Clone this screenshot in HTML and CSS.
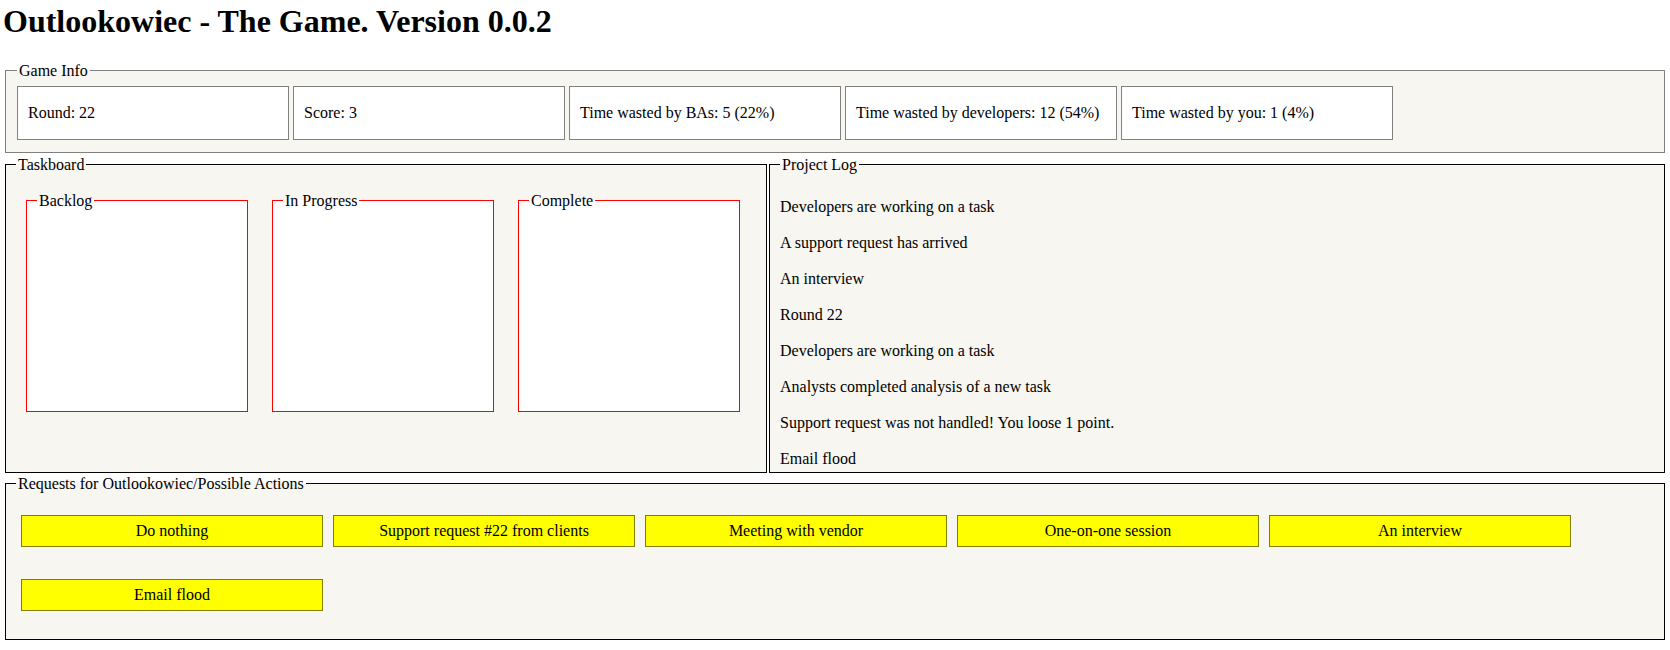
FILE: index.html
```html
<!DOCTYPE html>
<html>
<head>
<meta charset="utf-8">
<title>Outlookowiec - The Game</title>
<link rel="stylesheet" href="styles.css">
</head>
<body>
<h1 class="title">Outlookowiec - The Game. Version 0.0.2</h1>

<fieldset class="panel panel-info">
  <legend>Game Info</legend>
  <div class="info-row">
    <div class="info-box">Round: 22</div>
    <div class="info-box">Score: 3</div>
    <div class="info-box">Time wasted by BAs: 5 (22%)</div>
    <div class="info-box">Time wasted by developers: 12 (54%)</div>
    <div class="info-box">Time wasted by you: 1 (4%)</div>
  </div>
</fieldset>

<div class="middle">
  <fieldset class="panel panel-board">
    <legend>Taskboard</legend>
    <div class="board-body">
      <fieldset class="column"><legend>Backlog</legend><div class="column-body"></div></fieldset>
      <fieldset class="column"><legend>In Progress</legend><div class="column-body"></div></fieldset>
      <fieldset class="column"><legend>Complete</legend><div class="column-body"></div></fieldset>
    </div>
  </fieldset>
  <fieldset class="panel panel-log">
    <legend>Project Log</legend>
    <div class="log-body">
      <p>Developers are working on a task</p>
      <p>A support request has arrived</p>
      <p>An interview</p>
      <p>Round 22</p>
      <p>Developers are working on a task</p>
      <p>Analysts completed analysis of a new task</p>
      <p>Support request was not handled! You loose 1 point.</p>
      <p>Email flood</p>
    </div>
  </fieldset>
</div>

<fieldset class="panel panel-actions">
  <legend>Requests for Outlookowiec/Possible Actions</legend>
  <div class="actions">
    <button class="action">Do nothing</button>
    <button class="action">Support request #22 from clients</button>
    <button class="action">Meeting with vendor</button>
    <button class="action">One-on-one session</button>
    <button class="action">An interview</button>
    <button class="action">Email flood</button>
  </div>
</fieldset>
</body>
</html>
```
FILE: styles.css
```css
html, body {
  background: #fff;
}
body {
  margin: 0;
  padding: 3px;
  font-family: "Liberation Serif", "Times New Roman", serif;
  font-size: 16px;
  color: #000;
}
.title {
  margin: 0 0 21px;
  font-size: 32px;
  font-weight: bold;
  line-height: 37px;
}
.panel {
  margin: 0 2px;
  padding: 0 10px;
  border: 1px solid #000;
  background: #f7f6f0;
  min-width: 0;
}
legend {
  padding: 0 2px;
  line-height: 19px;
}
.panel-info {
  border-color: #808080;
  padding: 6px 11px 12px;
}
.info-row {
  display: flex;
  gap: 4px;
}
.info-box {
  box-sizing: border-box;
  width: 272px;
  height: 54px;
  border: 1px solid #808080;
  background: #fff;
  padding: 0 10px;
  line-height: 52px;
  white-space: nowrap;
}
.middle {
  display: flex;
  gap: 2px;
  margin: 2px 2px 0;
}
.middle .panel {
  margin: 0;
}
.panel-board {
  box-sizing: border-box;
  width: 762px;
  flex: none;
}
.panel-log {
  flex: 1;
}
.board-body {
  box-sizing: border-box;
  height: 298px;
  padding: 17px 0 0 10px;
  display: flex;
  align-items: flex-start;
  gap: 24px;
}
.column {
  box-sizing: border-box;
  width: 222px;
  margin: 0;
  padding: 0 10px;
  border: 1px solid #f00;
  background: #fff;
}
.column-body {
  height: 201px;
}
.log-body {
  box-sizing: border-box;
  height: 298px;
  padding-top: 7px;
  overflow: hidden;
}
.log-body p {
  margin: 16px 0;
  line-height: 20px;
}
.panel-actions {
  margin-top: 1px;
  padding: 6px 10px 12px;
}
.actions {
  display: flex;
  flex-wrap: wrap;
  column-gap: 10px;
  row-gap: 32px;
  padding: 16px 5px;
}
.action {
  box-sizing: border-box;
  width: 302px;
  height: 32px;
  padding: 0;
  border: 1px solid #808000;
  background: #ffff00;
  color: #000;
  font: inherit;
  text-align: center;
}
```
